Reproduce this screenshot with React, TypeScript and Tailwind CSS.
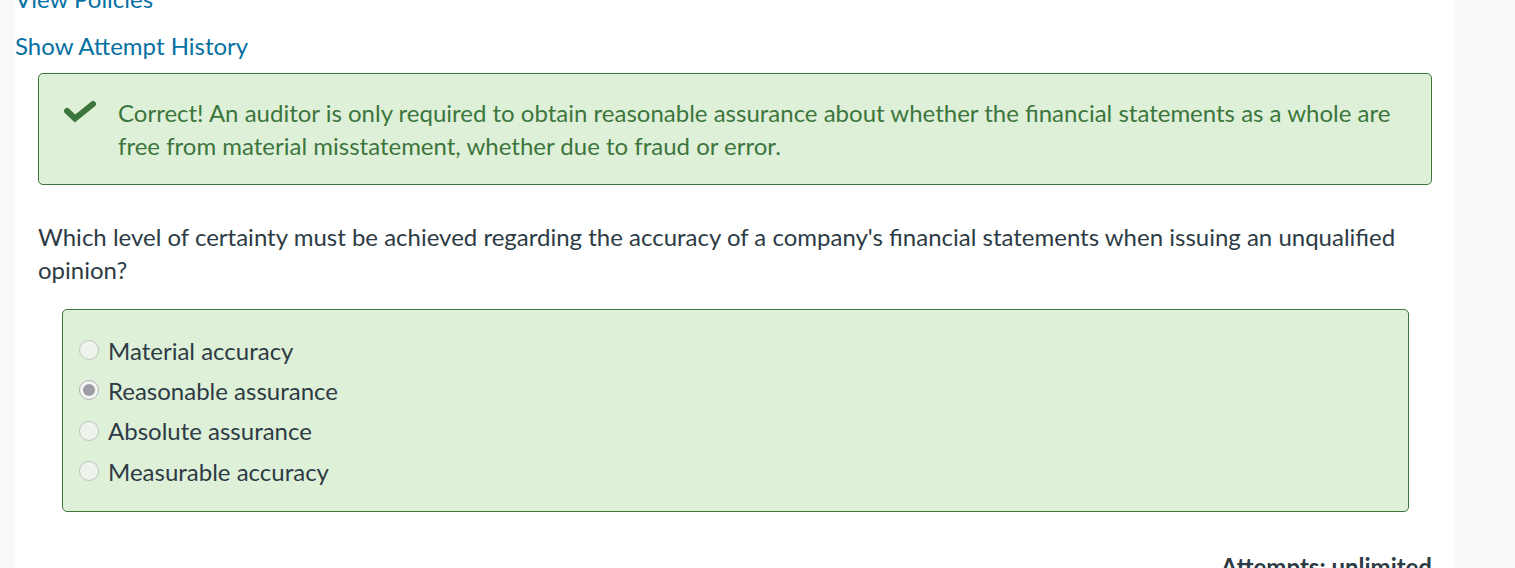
const answers = [
  { label: 'Material accuracy', checked: false },
  { label: 'Reasonable assurance', checked: true },
  { label: 'Absolute assurance', checked: false },
  { label: 'Measurable accuracy', checked: false },
]

function CheckMark() {
  return (
    <svg width="34" height="22" viewBox="0 0 34 22" className="shrink-0">
      <path
        d="M4 10 L12 17.5 L30 3"
        fill="none"
        stroke="#3c763d"
        strokeWidth="6"
        strokeLinecap="round"
        strokeLinejoin="miter"
      />
    </svg>
  )
}

function Radio({ checked }: { checked: boolean }) {
  return (
    <span
      className={
        checked
          ? 'flex h-[20px] w-[20px] shrink-0 items-center justify-center rounded-full border border-[#afb2b6] bg-[#f4f6f4]'
          : 'flex h-[20px] w-[20px] shrink-0 items-center justify-center rounded-full border border-[#bfc6bd] bg-[#eef4ec]'
      }
    >
      {checked && <span className="h-[12px] w-[12px] rounded-full bg-[#9c9ca4]" />}
    </span>
  )
}

export default function App() {
  return (
    <div
      className="flex h-[568px] w-full overflow-hidden bg-[#f9f9f9] text-[24px] leading-[33px] text-[#2d3b45]"
      style={{ fontFamily: 'Lato, "Open Sans", sans-serif' }}
    >
      <div className="ml-[15px] w-[1440px] bg-white">
        <div className="-mt-[18px] flex flex-col items-start gap-[14px]">
          <a className="text-[#0770a3]">View Policies</a>
          <a className="text-[#0770a3]">Show Attempt History</a>
        </div>

        <div className="px-[23px] pt-[11px]">
          {/* feedback */}
          <div className="flex items-start gap-[21px] rounded-[5px] border border-[#3c763d] bg-[#dff0d8] py-[22px] pl-[24px] pr-[30px] text-[#3c763d]">
            <div className="pt-[5px]">
              <CheckMark />
            </div>
            <p>
              Correct! An auditor is only required to obtain reasonable assurance about whether the financial statements as a whole are free from material misstatement, whether due to fraud or error.
            </p>
          </div>

          <p className="mt-[35px]">
            Which level of certainty must be achieved regarding the accuracy of a company's financial statements when issuing an unqualified opinion?
          </p>

          <div className="ml-[24px] mr-[23px] mt-[23px] rounded-[5px] border border-[#3c763d] bg-[#dff0d8] px-[16px] py-[20px]">
            {answers.map((a) => (
              <div key={a.label} className="flex h-[40.3px] items-center gap-[9px]">
                <Radio checked={a.checked} />
                <span>{a.label}</span>
              </div>
            ))}
          </div>

          <div className="mt-[38px] text-right font-bold">Attempts: unlimited</div>
        </div>
      </div>
    </div>
  )
}
